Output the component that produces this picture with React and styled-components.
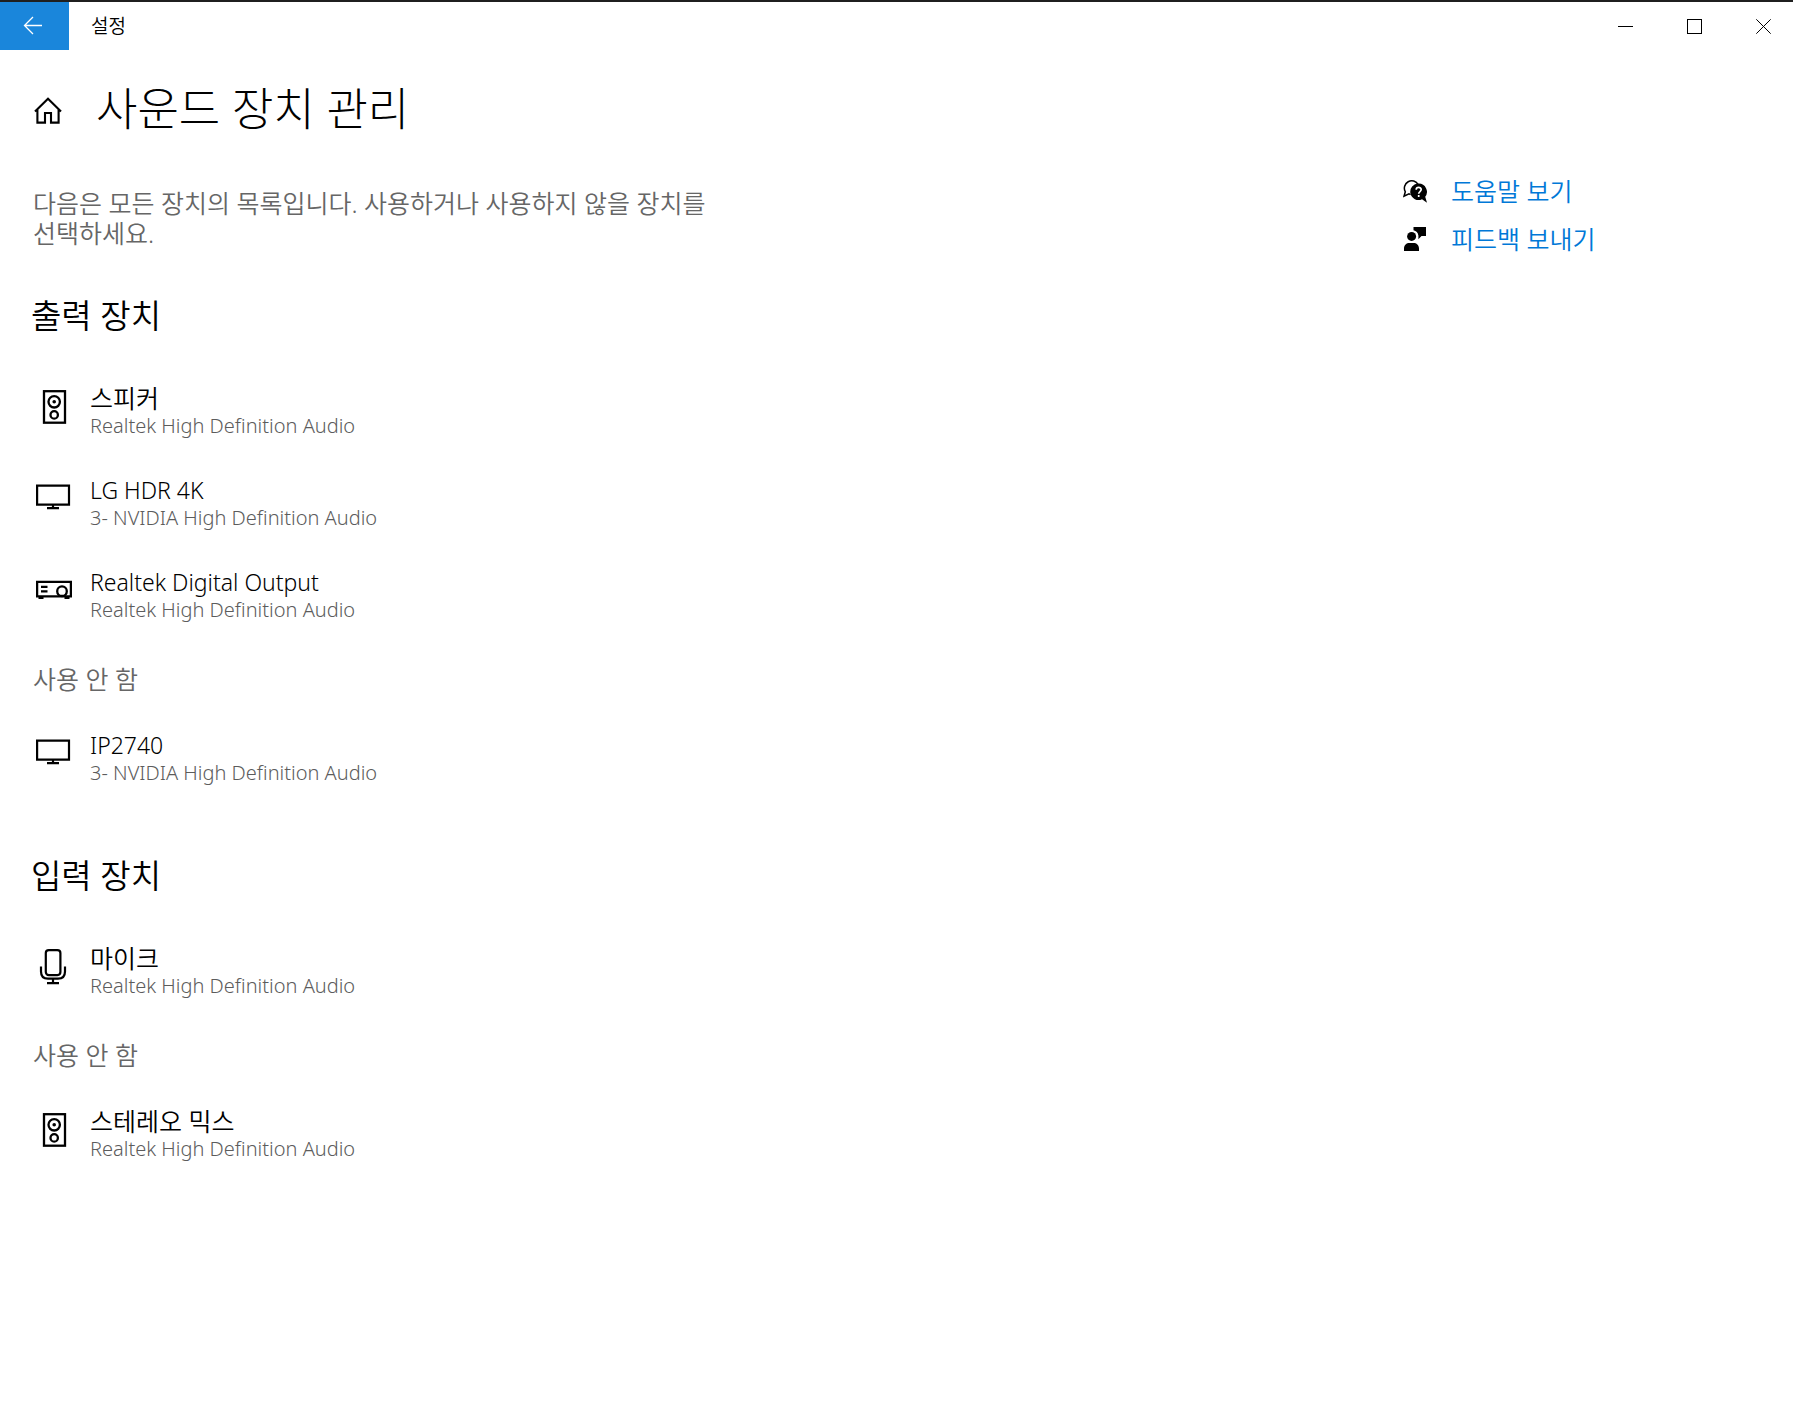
import React from 'react';
import styled, { createGlobalStyle } from 'styled-components';

const GlobalStyle = createGlobalStyle`
  * {
    box-sizing: border-box;
  }

  body {
    margin: 0;
    background: #fff;
    color: #000;
    font-family: 'Noto Sans', 'Noto Sans CJK KR', sans-serif;
    font-size: 25px;
    font-weight: 350;
    line-height: 30px;
    word-break: keep-all;
  }

  button {
    padding: 0;
    border: 0;
    background: none;
    color: inherit;
    cursor: pointer;
  }

  svg {
    display: block;
    flex: none;
    fill: none;
    stroke: currentColor;
  }
`;

const BackIcon = () => (
  <svg width="20" height="20" viewBox="0 0 20 20" strokeWidth="1.3">
    <path d="M19 9.5H1.6M10 1L1.5 9.5L10 18" />
  </svg>
);

const MinimizeIcon = () => (
  <svg width="15" height="15" viewBox="0 0 15 15">
    <path d="M0 7.5H15" />
  </svg>
);

const MaximizeIcon = () => (
  <svg width="15" height="15" viewBox="0 0 15 15">
    <rect x="0.5" y="0.5" width="14" height="14" />
  </svg>
);

const CloseIcon = () => (
  <svg width="15" height="15" viewBox="0 0 15 15">
    <path d="M0.3 0.3L14.7 14.7M14.7 0.3L0.3 14.7" />
  </svg>
);

const HomeIcon = () => (
  <svg width="28" height="28" viewBox="0 0 28 28" strokeWidth="2.1">
    <path d="M1 14.6L14 1.8L27 14.6M3.4 12.6V25.6H11V16H17V25.6H24.6V12.6" />
  </svg>
);

const HelpIcon = () => (
  <svg width="24" height="24" viewBox="0 0 24 24">
    <path
      d="M7.6 15.6L6 14.9L1 17.3L2.3 12.8A7.3 7.3 0 1 1 15.2 5.6"
      strokeWidth="1.5"
    />
    <path
      d="M15.6 4.6A8.2 8.2 0 1 0 19 20.2L24 23.8L22.2 17.8A8.2 8.2 0 0 0 15.6 4.6Z"
      fill="currentColor"
      stroke="none"
    />
    <path
      d="M13.2 10.7C13.2 7.7 18.2 7.7 18.2 10.6C18.2 12.6 15.7 12.5 15.7 14.8M15.7 16V18"
      stroke="#fff"
      strokeWidth="1.7"
    />
  </svg>
);

const FeedbackIcon = () => (
  <svg width="24" height="24" viewBox="0 0 24 24">
    <path
      d="M10.5 0H23V9H18.5L15.4 12.2V8.4C15 5.6 13.2 4 10.5 3.2ZM1 24V21.5C1 18 3.5 16 6.5 16H10.5C13.5 16 16 18 16 21.5V24Z"
      fill="currentColor"
      stroke="none"
    />
    <circle cx="8.6" cy="9.4" r="4.5" fill="currentColor" stroke="none" />
  </svg>
);

const SpeakerIcon = () => (
  <svg width="36" height="36" viewBox="0 0 36 36" strokeWidth="2.3">
    <rect x="8" y="2.2" width="21" height="31.5" />
    <circle cx="18.2" cy="12.8" r="5.7" />
    <circle cx="18.2" cy="25.9" r="3.7" />
    <circle cx="18.2" cy="12.8" r="1.8" fill="currentColor" stroke="none" />
  </svg>
);

const MonitorIcon = () => (
  <svg width="36" height="36" viewBox="0 0 36 36" strokeWidth="2.2">
    <path d="M1.1 4.6H33V23.6H1.1ZM17 23.6V27.2M11 27.2H23" />
  </svg>
);

const ProjectorIcon = () => (
  <svg width="36" height="36" viewBox="0 0 36 36" strokeWidth="2.3">
    <path d="M1.1 8.8H34.9V23.4H1.1ZM5 13.8H11.5M5 18.4H11.5" />
    <circle cx="26" cy="18.2" r="4.8" />
    <path d="M2.5 24.6H7.5M28.5 24.6H33.5" strokeWidth="3" />
  </svg>
);

const MicIcon = () => (
  <svg width="36" height="36" viewBox="0 0 36 36" strokeWidth="2.2">
    <rect x="9.8" y="1.1" width="14.6" height="25" rx="3" />
    <path d="M5 17.5V22.5C5 27.5 8 29.7 12 29.7H22C26 29.7 29 27.5 29 22.5V17.5M17 29.7V34.2M11 34.2H23" />
  </svg>
);

const TitleBar = styled.header`
  display: flex;
  align-items: center;
  height: 50px;
  border-top: 2px solid #1f1f1f;
  font-size: 19px;
`;

const BackButton = styled.button`
  display: flex;
  align-items: center;
  align-self: stretch;
  width: 69px;
  padding-left: 23px;
  background: #1a86db;
  color: #fff;
`;

const AppName = styled.span`
  flex: 1;
  padding-left: 22px;
`;

const WindowControls = styled.div`
  display: flex;
  align-self: stretch;
  gap: 10px;
`;

const WindowButton = styled.button`
  display: flex;
  align-items: center;
  justify-content: center;
  width: 59px;
`;

const PageHeader = styled.div`
  display: flex;
  align-items: center;
  gap: 34px;
  padding: 29px 34px 37px;
`;

const HomeButton = styled.button`
  padding-top: 4px;
`;

const Title = styled.h1`
  margin: 0;
  font-size: 45px;
  font-weight: 300;
  line-height: 60px;
`;

const Columns = styled.div`
  display: flex;
  align-items: flex-start;
  justify-content: space-between;
`;

const Main = styled.main`
  max-width: 760px;
  padding: 12px 31px 60px;
`;

const Description = styled.p`
  margin: 0;
  padding-left: 2px;
  color: #666;
`;

const SectionTitle = styled.h2`
  margin: ${(props) => (props.$spaced ? '68px' : '46px')} 0 45px;
  font-size: 33px;
  font-weight: 350;
  line-height: 44px;
`;

const GroupLabel = styled.h3`
  margin: 41px 0 36px;
  padding-left: 2px;
  color: #666;
  font-size: 25px;
  font-weight: 350;
`;

const DeviceList = styled.ul`
  display: flex;
  flex-direction: column;
  gap: 36px;
  margin: 0;
  padding: 0;
  list-style: none;
`;

const DeviceItem = styled.li`
  display: flex;
  gap: 18px;
  padding-left: 5px;

  svg {
    margin-top: 6px;
  }
`;

const DeviceName = styled.p`
  margin: 0;
  font-size: ${(props) => (props.$latin ? '23px' : '25px')};
`;

const DeviceDriver = styled.p`
  margin: 0;
  color: #5c5c5c;
  font-size: 20px;
  line-height: 26px;
`;

const SideLinks = styled.aside`
  display: flex;
  flex-direction: column;
  gap: 18px;
  width: 390px;
`;

const SideLink = styled.a`
  display: flex;
  align-items: center;
  gap: 24px;
  color: #0078d7;
  text-decoration: none;

  svg {
    color: #000;
  }
`;

const outputDevices = [
  { name: '스피커', driver: 'Realtek High Definition Audio', icon: SpeakerIcon },
  { name: 'LG HDR 4K', driver: '3- NVIDIA High Definition Audio', icon: MonitorIcon, latin: true },
  { name: 'Realtek Digital Output', driver: 'Realtek High Definition Audio', icon: ProjectorIcon, latin: true },
];

const disabledOutputs = [
  { name: 'IP2740', driver: '3- NVIDIA High Definition Audio', icon: MonitorIcon, latin: true },
];

const inputDevices = [
  { name: '마이크', driver: 'Realtek High Definition Audio', icon: MicIcon },
];

const disabledInputs = [
  { name: '스테레오 믹스', driver: 'Realtek High Definition Audio', icon: SpeakerIcon },
];

const Devices = ({ items }) => (
  <DeviceList>
    {items.map(({ name, driver, icon: Icon, latin }) => (
      <DeviceItem key={name}>
        <Icon />
        <div>
          <DeviceName $latin={latin}>{name}</DeviceName>
          <DeviceDriver>{driver}</DeviceDriver>
        </div>
      </DeviceItem>
    ))}
  </DeviceList>
);

const App = () => {
  return (
    <>
      <GlobalStyle />
      <TitleBar>
        <BackButton aria-label="뒤로">
          <BackIcon />
        </BackButton>
        <AppName>설정</AppName>
        <WindowControls>
          <WindowButton aria-label="최소화"><MinimizeIcon /></WindowButton>
          <WindowButton aria-label="최대화"><MaximizeIcon /></WindowButton>
          <WindowButton aria-label="닫기"><CloseIcon /></WindowButton>
        </WindowControls>
      </TitleBar>
      <PageHeader>
        <HomeButton aria-label="홈"><HomeIcon /></HomeButton>
        <Title>사운드 장치 관리</Title>
      </PageHeader>
      <Columns>
        <Main>
          <Description>
            다음은 모든 장치의 목록입니다. 사용하거나 사용하지 않을 장치를 선택하세요.
          </Description>
          <SectionTitle>출력 장치</SectionTitle>
          <Devices items={outputDevices} />
          <GroupLabel>사용 안 함</GroupLabel>
          <Devices items={disabledOutputs} />
          <SectionTitle $spaced>입력 장치</SectionTitle>
          <Devices items={inputDevices} />
          <GroupLabel>사용 안 함</GroupLabel>
          <Devices items={disabledInputs} />
        </Main>
        <SideLinks>
          <SideLink href="#help"><HelpIcon />도움말 보기</SideLink>
          <SideLink href="#feedback"><FeedbackIcon />피드백 보내기</SideLink>
        </SideLinks>
      </Columns>
    </>
  );
};

export default App;
